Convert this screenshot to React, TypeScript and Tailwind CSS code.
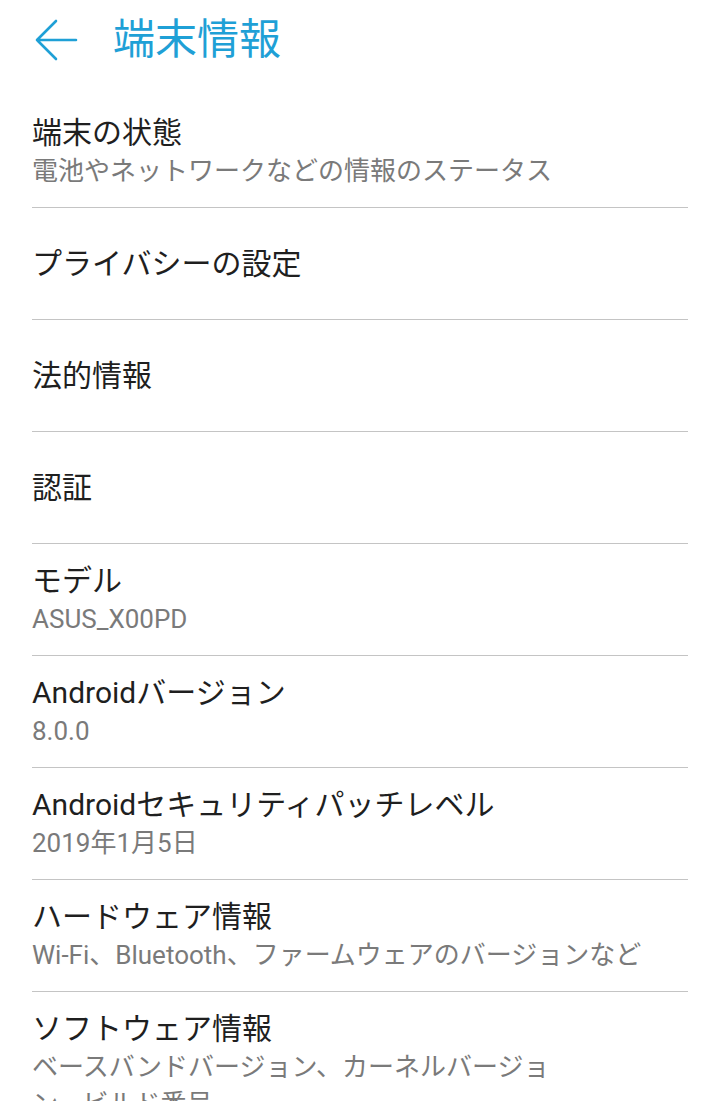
interface Item {
  title: string;
  summary?: string;
  summaryClass?: string;
}

const items: Item[] = [
  { title: "端末の状態", summary: "電池やネットワークなどの情報のステータス" },
  { title: "プライバシーの設定" },
  { title: "法的情報" },
  { title: "認証" },
  { title: "モデル", summary: "ASUS_X00PD" },
  { title: "Androidバージョン", summary: "8.0.0" },
  { title: "Androidセキュリティパッチレベル", summary: "2019年1月5日" },
  { title: "ハードウェア情報", summary: "Wi-Fi、Bluetooth、ファームウェアのバージョンなど" },
  {
    title: "ソフトウェア情報",
    summary: "ベースバンドバージョン、カーネルバージョン、ビルド番号",
    summaryClass: "max-w-[530px]",
  },
];

function Row({ item, last }: { item: Item; last: boolean }) {
  const single = !item.summary;
  return (
    <div
      className={`mx-8 h-[112px] flex flex-col ${single ? "justify-center" : "pt-[17px]"} ${
        last ? "h-auto" : "border-b border-[#c4c4c4]"
      }`}
    >
      <div className="text-[30px] leading-[40px] text-[#1f1f1f]">{item.title}</div>
      {item.summary && (
        <div className={`text-[26px] leading-[37px] text-[#7a7a7a] ${item.summaryClass ?? ""}`}>
          {item.summary}
        </div>
      )}
    </div>
  );
}

export default function App() {
  return (
    <div
      className="w-[720px] h-[1101px] overflow-hidden bg-white"
      style={{ fontFamily: 'Roboto, "Noto Sans CJK JP", sans-serif' }}
    >
      <header className="h-[96px] flex items-start pt-[14px]">
        <div className="w-[113px] h-[52px] flex items-center">
          <svg width="113" height="52" viewBox="0 0 113 52" fill="none">
            <path
              d="M37 26H76M56 7L37 26L56 45"
              stroke="#1fa0d6"
              strokeWidth="2.6"
              strokeLinecap="round"
              strokeLinejoin="round"
            />
          </svg>
        </div>
        <h1 className="text-[42px] leading-[52px] text-[#1fa0d6]">端末情報</h1>
      </header>
      {items.map((item, i) => (
        <Row key={item.title} item={item} last={i === items.length - 1} />
      ))}
    </div>
  );
}
